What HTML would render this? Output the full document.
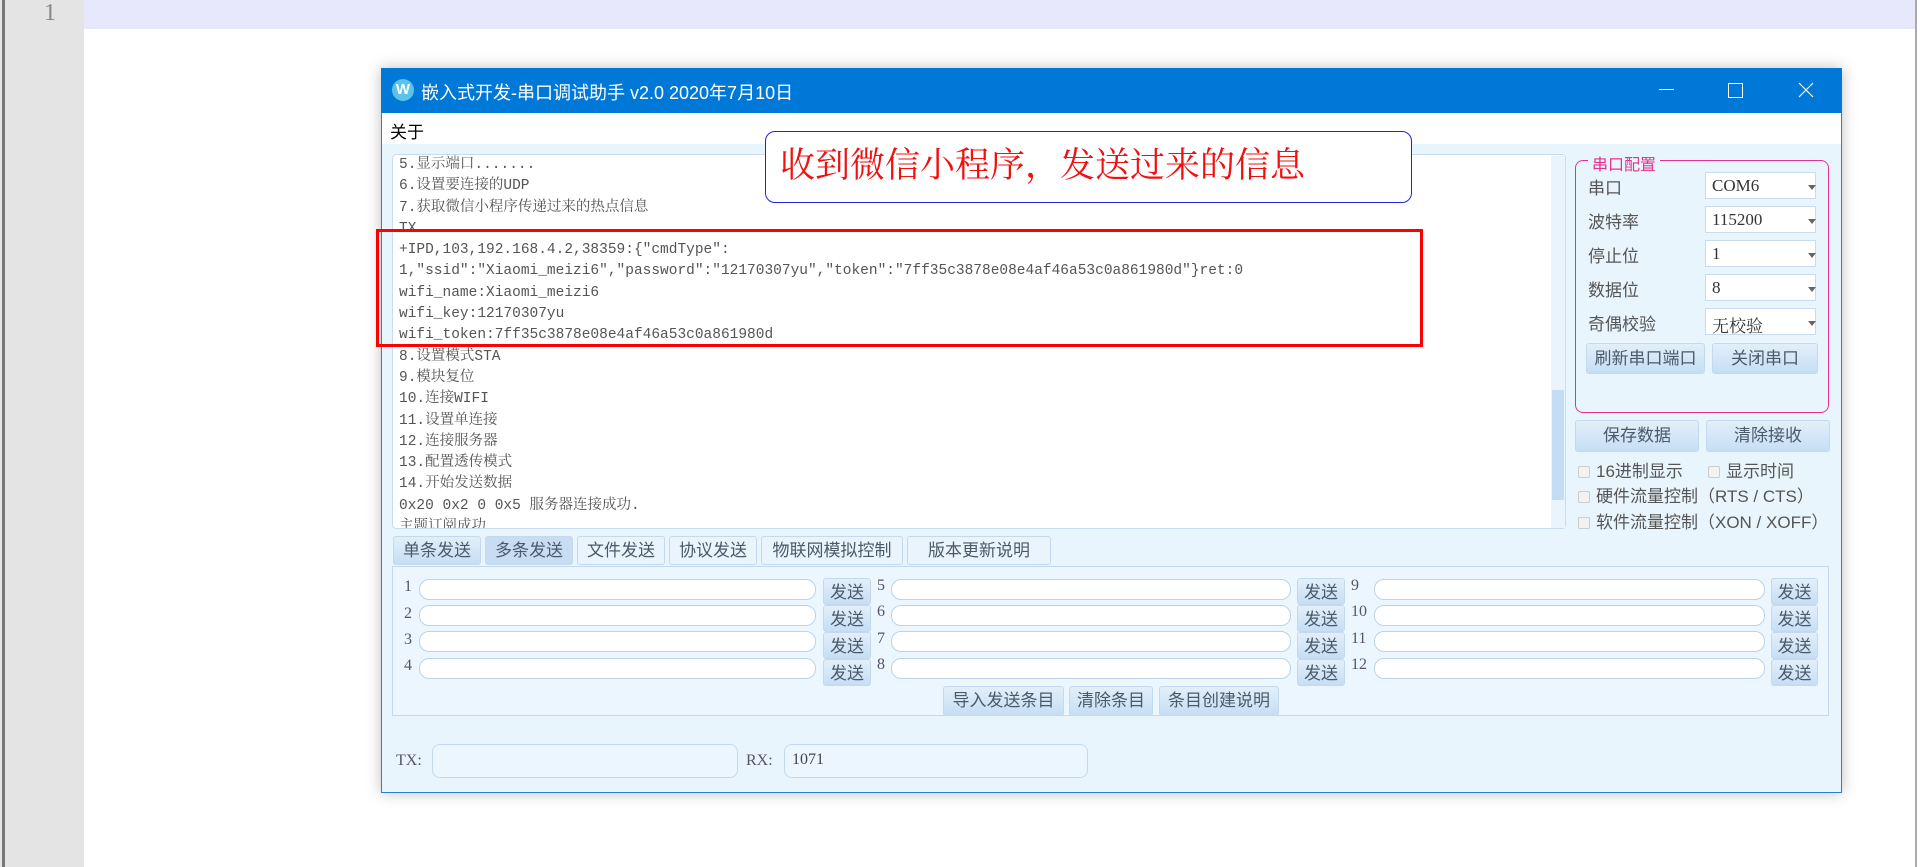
<!DOCTYPE html>
<html><head><meta charset="utf-8"><style>
*{box-sizing:border-box;margin:0;padding:0}
body{width:1920px;height:867px;position:relative;background:#fff;overflow:hidden;font-family:"Liberation Sans","Noto Sans CJK SC",sans-serif}
.a{position:absolute}
.ser{font-family:"Liberation Serif","Noto Serif CJK SC",serif}
.btn{position:absolute;background:linear-gradient(#e3effa,#c6def4);border:1px solid #c4d9ee;border-radius:3px;color:#4a5a6a;font-size:17px;text-align:center;font-family:"Liberation Sans","Noto Sans CJK SC",sans-serif}
.inp{position:absolute;background:#fff;border:1px solid #bcd3e8;border-radius:10px;height:21px}
.lbl{position:absolute;color:#556;font-size:16px;font-family:"Liberation Serif","Noto Serif CJK SC",serif}
.sel{position:absolute;left:1705px;width:111px;height:27px;background:#fff;border:1px solid #c9dcee;font-size:17px;color:#333;padding:3px 6px;font-family:"Liberation Serif","Noto Serif CJK SC",serif}
.sel:after{content:"";position:absolute;right:-1px;top:12px;border:4px solid transparent;border-top:5px solid #666}
.rl{position:absolute;left:1588px;font-size:17px;color:#555}
.cb{position:absolute;font-size:17px;color:#555}
.cb i{display:inline-block;width:12px;height:12px;border:1px solid #ccc;border-radius:2px;background:#f2f2f2;margin-right:6px;vertical-align:-1px}
#txt div{height:21.3px;line-height:21.3px;white-space:nowrap}
</style></head><body>
<div class="a" style="left:0;top:0;width:84px;height:867px;background:#e4e4e4"></div>
<div class="a" style="left:2px;top:0;width:3px;height:867px;background:#777"></div>
<div class="a ser" style="left:44px;top:0;font-size:24px;color:#888">1</div>
<div class="a" style="left:84px;top:0;width:1831px;height:29px;background:#e8e8fc"></div>
<div class="a" style="left:1915px;top:0;width:2px;height:867px;background:#aaa"></div>

<div class="a" style="left:381px;top:68px;width:1461px;height:725px;background:#e9f5fd;border:1px solid #2a7fd0;box-shadow:0 0 14px rgba(0,0,0,.25)"></div>
<div class="a" style="left:381px;top:68px;width:1461px;height:45px;background:#0078d7"></div>
<div class="a" style="left:392px;top:79px;width:22px;height:22px;border-radius:50%;background:#5bc3ea;color:#fff;font-size:15px;text-align:center;line-height:22px;font-weight:bold">W</div>
<div class="a" style="left:421px;top:79px;color:#fff;font-size:18px">嵌入式开发-串口调试助手 v2.0 2020年7月10日</div>
<div class="a" style="left:1659px;top:89px;width:15px;height:1px;background:#fff"></div>
<div class="a" style="left:1728px;top:83px;width:15px;height:15px;border:1px solid #fff"></div>
<svg class="a" style="left:1798px;top:82px" width="16" height="16"><path d="M1 1L15 15M15 1L1 15" stroke="#fff" stroke-width="1.2"/></svg>
<div class="a" style="left:382px;top:113px;width:1459px;height:31px;background:#fff"></div>
<div class="a" style="left:390px;top:118px;font-size:17px;color:#000">关于</div>

<div class="a" style="left:392px;top:154px;width:1174px;height:375px;background:#fff;border:1px solid #c8dced;border-radius:4px"></div>
<div class="a" style="left:1551px;top:156px;width:14px;height:372px;background:#eaf4fc"></div>
<div class="a" style="left:1552px;top:390px;width:12px;height:110px;background:#c4ddf3"></div>
<div id="txt" class="a" style="left:399px;top:155px;width:1150px;height:373px;overflow:hidden;font-size:14.5px;color:#555;font-family:'Liberation Mono','Noto Serif CJK SC',monospace">
<div>5.显示端口.......</div><div>6.设置要连接的UDP</div><div>7.获取微信小程序传递过来的热点信息</div><div>TX</div>
<div>+IPD,103,192.168.4.2,38359:{"cmdType":</div>
<div>1,"ssid":"Xiaomi_meizi6","password":"12170307yu","token":"7ff35c3878e08e4af46a53c0a861980d"}ret:0</div>
<div>wifi_name:Xiaomi_meizi6</div><div>wifi_key:12170307yu</div><div>wifi_token:7ff35c3878e08e4af46a53c0a861980d</div>
<div>8.设置模式STA</div><div>9.模块复位</div><div>10.连接WIFI</div><div>11.设置单连接</div><div>12.连接服务器</div><div>13.配置透传模式</div><div>14.开始发送数据</div><div>0x20 0x2 0 0x5 服务器连接成功.</div><div>主题订阅成功</div>
</div>
<div class="a" style="left:765px;top:131px;width:647px;height:72px;background:#fff;border:1.5px solid #2222dd;border-radius:10px"></div>
<div class="a" style="left:780px;top:138px;font-size:35px;color:#f01010;font-family:'Noto Serif CJK SC',serif">收到微信小程序，发送过来的信息</div>
<div class="a" style="left:376px;top:229px;width:1047px;height:118px;border:3px solid #f00"></div>

<div class="a" style="left:1575px;top:160px;width:254px;height:253px;border:1.5px solid #e8308f;border-radius:8px"></div>
<div class="a" style="left:1588px;top:151px;background:#e9f5fd;padding:0 4px;color:#e8308f;font-size:16px">串口配置</div>
<div class="rl" style="top:174px">串口</div><div class="sel" style="top:172px">COM6</div>
<div class="rl" style="top:208px">波特率</div><div class="sel" style="top:206px">115200</div>
<div class="rl" style="top:242px">停止位</div><div class="sel" style="top:240px">1</div>
<div class="rl" style="top:276px">数据位</div><div class="sel" style="top:274px">8</div>
<div class="rl" style="top:310px">奇偶校验</div><div class="sel" style="top:308px">无校验</div>
<div class="btn" style="left:1586px;top:343px;width:119px;height:31px;line-height:29px">刷新串口端口</div>
<div class="btn" style="left:1712px;top:343px;width:106px;height:31px;line-height:29px">关闭串口</div>
<div class="btn" style="left:1575px;top:420px;width:124px;height:32px;line-height:30px">保存数据</div>
<div class="btn" style="left:1706px;top:420px;width:124px;height:32px;line-height:30px">清除接收</div>
<div class="cb" style="left:1578px;top:457px"><i></i>16进制显示</div>
<div class="cb" style="left:1708px;top:457px"><i></i>显示时间</div>
<div class="cb" style="left:1578px;top:482px"><i></i>硬件流量控制（RTS / CTS）</div>
<div class="cb" style="left:1578px;top:508px"><i></i>软件流量控制（XON / XOFF）</div>

<div class="btn" style="left:393px;top:536px;width:88px;height:29px;line-height:27px">单条发送</div>
<div class="btn" style="left:485px;top:536px;width:88px;height:29px;line-height:27px;background:#c8ddf1">多条发送</div>
<div class="btn" style="left:577px;top:536px;width:88px;height:29px;line-height:27px;background:#eaf4fc">文件发送</div>
<div class="btn" style="left:669px;top:536px;width:88px;height:29px;line-height:27px;background:#eaf4fc">协议发送</div>
<div class="btn" style="left:761px;top:536px;width:142px;height:29px;line-height:27px;background:#eaf4fc">物联网模拟控制</div>
<div class="btn" style="left:907px;top:536px;width:144px;height:29px;line-height:27px;background:#eaf4fc">版本更新说明</div>
<div class="a" style="left:392px;top:566px;width:1437px;height:150px;border:1px solid #c4d9ee;background:#ecf6fe"></div>

<div class="lbl" style="left:404px;top:578px">1</div><div class="inp" style="left:419px;top:579px;width:397px"></div>
<div class="lbl" style="left:404px;top:605px">2</div><div class="inp" style="left:419px;top:605px;width:397px"></div>
<div class="lbl" style="left:404px;top:631px">3</div><div class="inp" style="left:419px;top:631px;width:397px"></div>
<div class="lbl" style="left:404px;top:657px">4</div><div class="inp" style="left:419px;top:658px;width:397px"></div>
<div class="lbl" style="left:877px;top:577px">5</div><div class="inp" style="left:891px;top:579px;width:400px"></div>
<div class="lbl" style="left:877px;top:603px">6</div><div class="inp" style="left:891px;top:605px;width:400px"></div>
<div class="lbl" style="left:877px;top:630px">7</div><div class="inp" style="left:891px;top:631px;width:400px"></div>
<div class="lbl" style="left:877px;top:656px">8</div><div class="inp" style="left:891px;top:658px;width:400px"></div>
<div class="lbl" style="left:1351px;top:577px">9</div><div class="inp" style="left:1374px;top:579px;width:391px"></div>
<div class="lbl" style="left:1351px;top:603px">10</div><div class="inp" style="left:1374px;top:605px;width:391px"></div>
<div class="lbl" style="left:1351px;top:630px">11</div><div class="inp" style="left:1374px;top:631px;width:391px"></div>
<div class="lbl" style="left:1351px;top:656px">12</div><div class="inp" style="left:1374px;top:658px;width:391px"></div>

<div class="btn" style="left:823px;top:578px;width:48px;height:27px;line-height:27px">发送</div>
<div class="btn" style="left:823px;top:605px;width:48px;height:27px;line-height:27px">发送</div>
<div class="btn" style="left:823px;top:632px;width:48px;height:27px;line-height:27px">发送</div>
<div class="btn" style="left:823px;top:659px;width:48px;height:27px;line-height:27px">发送</div>
<div class="btn" style="left:1297px;top:578px;width:48px;height:27px;line-height:27px">发送</div>
<div class="btn" style="left:1297px;top:605px;width:48px;height:27px;line-height:27px">发送</div>
<div class="btn" style="left:1297px;top:632px;width:48px;height:27px;line-height:27px">发送</div>
<div class="btn" style="left:1297px;top:659px;width:48px;height:27px;line-height:27px">发送</div>
<div class="btn" style="left:1771px;top:578px;width:47px;height:27px;line-height:27px">发送</div>
<div class="btn" style="left:1771px;top:605px;width:47px;height:27px;line-height:27px">发送</div>
<div class="btn" style="left:1771px;top:632px;width:47px;height:27px;line-height:27px">发送</div>
<div class="btn" style="left:1771px;top:659px;width:47px;height:27px;line-height:27px">发送</div>
<div class="btn" style="left:943px;top:686px;width:121px;height:30px;line-height:28px">导入发送条目</div>
<div class="btn" style="left:1069px;top:686px;width:84px;height:30px;line-height:28px">清除条目</div>
<div class="btn" style="left:1159px;top:686px;width:120px;height:30px;line-height:28px">条目创建说明</div>

<div class="lbl" style="left:396px;top:752px">TX:</div>
<div class="a" style="left:432px;top:744px;width:306px;height:34px;border:1px solid #c4d9ee;border-radius:8px;background:#ecf6fe"></div>
<div class="lbl" style="left:746px;top:752px">RX:</div>
<div class="a" style="left:784px;top:744px;width:304px;height:34px;border:1px solid #c4d9ee;border-radius:8px;background:#ecf6fe"></div>
<div class="lbl" style="left:792px;top:751px;color:#444">1071</div>
</body></html>
